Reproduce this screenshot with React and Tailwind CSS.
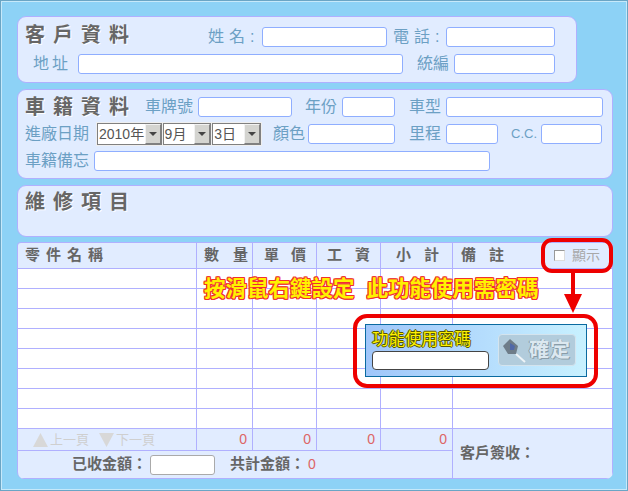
const titleClass = "whitespace-nowrap text-[20px] leading-5 tracking-[8px] font-bold text-[#666666] [text-shadow:1px_1px_0_#ffffff]"
const labelClass = "shrink-0 whitespace-nowrap text-[16px] leading-5 text-[#6CA0C4]"
const headClass = "flex items-center whitespace-nowrap border-r border-b border-[#B0B0FF] bg-[#E1ECFF] text-[15px] font-bold text-[#666666]"
const cellClass = "h-5 border-r border-b border-[#B0B0FF] bg-white"
const totalClass = "flex items-center justify-end border-r border-b border-[#B0B0FF] bg-[#E1ECFF] pr-[5px] text-[14px] text-[#DD6666]"

function Field({ className }) {
  return <input type="text" className={`h-5 shrink-0 rounded-[3px] border border-[#8FAEFF] bg-white ${className}`} />
}

function DropDown({ text, width }) {
  return (
    <div className={`flex h-[22px] items-center border border-[#808080] bg-white ${width}`}>
      <span className="flex-1 whitespace-nowrap pl-px text-[14px] leading-5 text-[#555555]">{text}</span>
      <span className="flex h-[20px] w-4 shrink-0 items-center justify-center border border-[#f2f2f2] border-r-[#808080] border-b-[#808080] bg-[#D4D4D0]">
        <svg width="8" height="4" viewBox="0 0 8 4"><path d="M0 0h8L4 4z" fill="#444444" /></svg>
      </span>
    </div>
  )
}

function Pager({ up, text }) {
  return (
    <div className="flex items-center gap-[2px]">
      <svg width="15" height="14" viewBox="0 0 15 14">
        <path d={up ? "M7.5 0L15 14H0z" : "M0 0h15L7.5 14z"} fill="#D8D8D8" />
      </svg>
      <span className="whitespace-nowrap text-[13px] leading-4 text-[#CFCFCF]">{text}</span>
    </div>
  )
}

export default function App() {
  const rows = [0, 1, 2, 3, 4, 5, 6, 7]

  return (
    <div className="relative h-[491px] w-[628px] overflow-hidden border border-[#6AA5C5] font-['Liberation_Sans','Noto_Sans_CJK_TC',sans-serif]">
      <div className="h-full border border-[#C6E9FA] bg-[#8DD2F6] pl-[15px] pt-[14px]">

        <div className="h-[67px] w-[560px] rounded-[9px] border border-[#B0B0FF] bg-[#E1ECFF] pl-[7px] pt-[10px]">
          <div className="flex h-5 items-center">
            <div className="h-5 w-[183px] shrink-0 -translate-y-0.5 leading-5"><span className={titleClass}>客戶資料</span></div>
            <span className={`${labelClass} w-[54px] tracking-[5px]`}>姓名:</span>
            <Field className="w-[125px]" />
            <span className={`${labelClass} w-[59px] pl-[6px] tracking-[5px]`}>電話:</span>
            <Field className="w-[109px]" />
          </div>
          <div className="mt-[7px] flex h-5 items-center">
            <span className={`${labelClass} w-[53px] pl-2 tracking-[3px]`}>地址</span>
            <Field className="w-[325px]" />
            <span className={`${labelClass} w-[51px] pl-[14px]`}>統編</span>
            <Field className="w-[101px]" />
          </div>
        </div>

        <div className="mt-[6px] h-[90px] w-[596px] rounded-[9px] border border-[#B0B0FF] bg-[#E1ECFF] pl-[7px] pt-[7px]">
          <div className="flex h-5 items-center">
            <div className="h-5 w-[120px] shrink-0 leading-5"><span className={titleClass}>車籍資料</span></div>
            <span className={`${labelClass} w-[53px]`}>車牌號</span>
            <Field className="w-[94px]" />
            <span className={`${labelClass} w-[50px] pl-[13px]`}>年份</span>
            <Field className="w-[53px]" />
            <span className={`${labelClass} w-[51px] pl-[14px]`}>車型</span>
            <Field className="w-[157px]" />
          </div>
          <div className="mt-[7px] flex h-5 items-center">
            <span className={`${labelClass} w-[71px]`}>進廠日期</span>
            <div className="-my-0.5 flex h-6 w-[166px] shrink-0 items-center gap-px bg-[#EFEFEF] px-px">
              <DropDown text="2010年" width="w-[65px]" />
              <DropDown text="9月" width="w-[49px]" />
              <DropDown text="3日" width="w-[49px]" />
            </div>
            <span className={`${labelClass} w-[46px] pl-[11px]`}>顏色</span>
            <Field className="w-[87px]" />
            <span className={`${labelClass} w-[51px] pl-[14px]`}>里程</span>
            <Field className="w-[52px]" />
            <span className="w-[43px] shrink-0 whitespace-nowrap pl-[13px] text-[13px] leading-5 text-[#6CA0C4]">C.C.</span>
            <Field className="w-[61px]" />
          </div>
          <div className="mt-[7px] flex h-5 items-center">
            <span className={`${labelClass} w-[69px]`}>車籍備忘</span>
            <Field className="w-[396px]" />
          </div>
        </div>

        <div className="mt-[6px] h-[52px] w-[596px] rounded-[9px] border border-[#B0B0FF] bg-[#E1ECFF] pl-[7px] pt-[6px] leading-5">
          <span className={titleClass}>維修項目</span>
        </div>

        <div className="mt-[5px] grid w-[596px] grid-cols-[179px_56px_64px_64px_72px_160px] grid-rows-[26px_repeat(8,20px)_22px_28px] overflow-hidden rounded-t-[4px] rounded-b-[7px] border-t border-l border-[#B0B0FF]">
          <div className={`${headClass} pl-[7px] tracking-[6px]`}>零件名稱</div>
          <div className={`${headClass} pl-[7px] tracking-[14px]`}>數量</div>
          <div className={`${headClass} pl-[11px] tracking-[12px]`}>單價</div>
          <div className={`${headClass} pl-[10px] tracking-[13px]`}>工資</div>
          <div className={`${headClass} pl-[15px] tracking-[13px]`}>小計</div>
          <div className={`${headClass} justify-between pl-2 pr-[12px]`}>
            <span className="tracking-[13px]">備註</span>
            <span className="flex items-center gap-[7px] text-[14px] font-normal tracking-normal text-[#A8A8A8]">
              <span className="h-[11px] w-[11px] border border-[#999999] border-r-[#dddddd] border-b-[#dddddd] bg-white" />
              顯示
            </span>
          </div>

          {rows.map((r) => (
            <div key={r} className="contents">
              <div className={cellClass} />
              <div className={cellClass} />
              <div className={cellClass} />
              <div className={cellClass} />
              <div className={cellClass} />
              <div className={cellClass} />
            </div>
          ))}

          <div className="flex items-center gap-[10px] border-r border-b border-[#B0B0FF] bg-[#E1ECFF] pl-[15px]">
            <Pager up text="上一頁" />
            <Pager text="下一頁" />
          </div>
          <div className={totalClass}>0</div>
          <div className={totalClass}>0</div>
          <div className={totalClass}>0</div>
          <div className={totalClass}>0</div>
          <div className="row-span-2 flex items-center whitespace-nowrap border-r border-b border-[#B0B0FF] bg-[#E1ECFF] pl-[7px] text-[15px] font-bold text-[#666666]">
            客戶簽收：
          </div>
          <div className="col-span-5 flex items-center border-r border-b border-[#B0B0FF] bg-[#E1ECFF] pl-[54px]">
            <span className="w-[78px] whitespace-nowrap text-[15px] font-bold text-[#666666]">已收金額：</span>
            <input type="text" className="h-5 w-[65px] rounded-[3px] border border-[#AAAAAA] bg-white" />
            <span className="ml-[15px] whitespace-nowrap text-[15px] font-bold text-[#666666]">共計金額：</span>
            <span className="ml-[3px] text-[14px] text-[#DD6666]">0</span>
          </div>
        </div>
      </div>

      {/* callouts drawn over the table */}
      <div className="absolute left-[203px] top-[276px] whitespace-pre text-[21.5px] font-bold leading-6 text-[#FFF200] [text-shadow:1px_0_#F03030,-1px_0_#F03030,0_1px_#F03030,0_-1px_#F03030,1px_1px_#F03030,-1px_-1px_#F03030,1px_-1px_#F03030,-1px_1px_#F03030]">
        按滑鼠右鍵設定  此功能使用需密碼
      </div>
      <div className="absolute left-[540px] top-[237px] h-[35px] w-[72px] rounded-[11px] border-4 border-[#EE0000]" />
      <svg className="absolute left-[563px] top-[271px]" width="18" height="41" viewBox="0 0 18 41">
        <path d="M7 0h4v22h7L9 41 0 22h7z" fill="#EE0000" />
      </svg>
      <div className="absolute left-[352px] top-[313px] h-[74px] w-[245px] rounded-[14px] border-4 border-[#EE0000]" />
      <div className="absolute left-[364px] top-[323px] h-[53px] w-[222px] border border-[#0A6AA0] bg-gradient-to-r from-[#A0C6FA] to-[#C8F1FF]">
        <div className="absolute left-[6px] top-[4px] whitespace-nowrap text-[16.5px] leading-5 text-[#FFF200] [text-shadow:1px_0_#555500,-1px_0_#555500,0_1px_#555500,0_-1px_#555500]">
          功能使用密碼
        </div>
        <input type="text" className="absolute left-[6px] top-[26px] h-[19px] w-[117px] rounded-[4px] border border-[#444444] bg-white" />
        <div className="absolute left-[132px] top-[9px] flex h-[32px] w-[78px] items-center rounded-[4px] border border-[#D4E4EE] bg-[#B2CCDC] pl-[3px]">
          <svg width="26" height="26" viewBox="0 0 26 26" className="shrink-0">
            <path d="M14 17l9 8" stroke="#EEF4F8" strokeWidth="2" />
            <path d="M8 2l8 7-2 8H6L1 9z" fill="#6E7C88" />
            <path d="M8 6l5 3-1 4H8z" fill="#5068A8" />
          </svg>
          <span className="ml-[1px] whitespace-nowrap text-[20px] font-bold leading-6 tracking-[1px] text-[#DCE8F0] [text-shadow:1px_1px_0_#8A9CA8,-1px_0_0_#8A9CA8]">確定</span>
        </div>
      </div>
    </div>
  )
}
